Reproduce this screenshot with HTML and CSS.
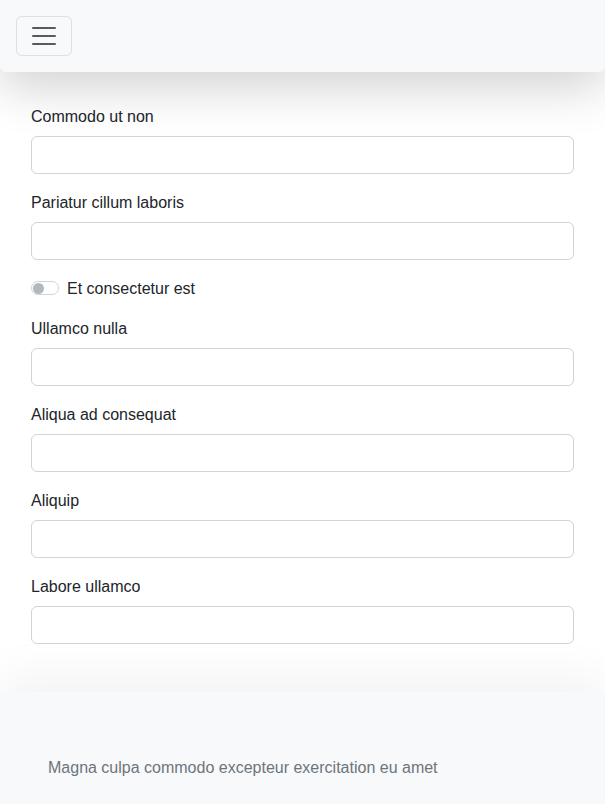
FILE: index.html
```html
<!DOCTYPE html>
<html lang="en">
<head>
<meta charset="utf-8">
<title>Form</title>
<link rel="stylesheet" href="styles.css">
</head>
<body>
<nav class="navbar">
  <button class="toggler" type="button" aria-label="Toggle navigation">
    <svg class="toggler-icon" viewBox="0 0 30 30" width="30" height="30"><path d="M4 7h22M4 15h22M4 23h22" stroke="rgba(33,37,41,0.75)" stroke-width="2" stroke-linecap="round" stroke-miterlimit="10"/></svg>
  </button>
</nav>
<main class="content">
  <form class="form">
    <div class="field">
      <label class="label">Commodo ut non</label>
      <input class="input" type="text">
    </div>
    <div class="field">
      <label class="label">Pariatur cillum laboris</label>
      <input class="input" type="text">
    </div>
    <div class="field check">
      <span class="switch"><span class="knob"></span></span>
      <label class="check-label">Et consectetur est</label>
    </div>
    <div class="field">
      <label class="label">Ullamco nulla</label>
      <input class="input" type="text">
    </div>
    <div class="field">
      <label class="label">Aliqua ad consequat</label>
      <input class="input" type="text">
    </div>
    <div class="field">
      <label class="label">Aliquip</label>
      <input class="input" type="text">
    </div>
    <div class="field">
      <label class="label">Labore ullamco</label>
      <input class="input" type="text">
    </div>
  </form>
</main>
<footer class="footer">
  <p class="footer-text">Magna culpa commodo excepteur exercitation eu amet</p>
</footer>
</body>
</html>
```
FILE: styles.css
```css
* { box-sizing: border-box; }
html, body { margin: 0; padding: 0; }
body {
  font-family: "Liberation Sans", Arial, sans-serif;
  font-size: 16px;
  line-height: 24px;
  color: #212529;
  background: #fff;
  overflow: hidden;
}
.navbar {
  position: relative;
  z-index: 2;
  background: #f8f9fa;
  padding: 16px;
  height: 72px;
  border-radius: 0 0 6px 6px;
  box-shadow: 0 16px 48px rgba(0,0,0,0.175);
}
.toggler {
  display: flex;
  align-items: center;
  justify-content: center;
  width: 56px;
  height: 40px;
  padding: 4px 12px;
  background: transparent;
  border: 1px solid rgba(0,0,0,0.1);
  border-radius: 6px;
}
.toggler-icon { display: block; }
.content {
  padding: 32px 31px 48px;
}
.form { display: flex; flex-direction: column; gap: 16px; }
.field { display: flex; flex-direction: column; }
.label { display: block; padding-top: 1px; margin-bottom: 7px; }
.input {
  display: block;
  width: 100%;
  height: 38px;
  border: 1px solid #ced4da;
  border-radius: 6px;
  background: #fff;
  font: inherit;
}
.check {
  flex-direction: row;
  align-items: center;
  height: 24px;
}
.check-label { padding-top: 1px; }
.switch {
  display: flex;
  align-items: center;
  width: 28px;
  height: 14px;
  border: 1px solid #ced4da;
  border-radius: 7px;
  padding: 0 1px;
  margin-right: 8px;
  background: #fff;
}
.knob {
  width: 11px;
  height: 11px;
  border-radius: 50%;
  background: #b3b8be;
}
.footer {
  position: relative;
  z-index: 1;
  background: #f8f9fa;
  padding: 64px 48px 24px;
  box-shadow: 0 -16px 48px rgba(0,0,0,0.05);
}
.footer-text { margin: 0; color: #6c757d; }
```
